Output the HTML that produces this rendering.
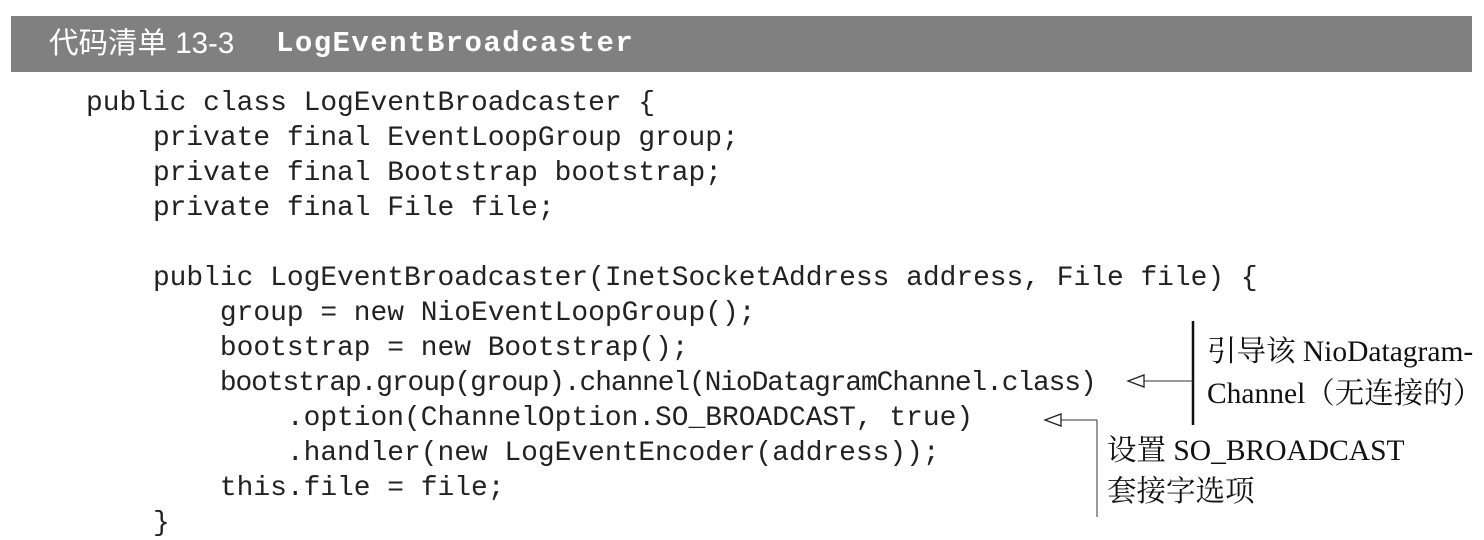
<!DOCTYPE html>
<html><head><meta charset="utf-8"><style>
html,body{margin:0;padding:0;background:#fff;width:1484px;height:540px;overflow:hidden;position:relative}
.bar{position:absolute;left:11px;top:16px;width:1461px;height:56px;background:#808080}
.t1{position:absolute;left:49px;top:26px;font:29.5px "Liberation Sans","Noto Sans CJK SC",sans-serif;color:#fff;line-height:36px;white-space:nowrap}
.t2{position:absolute;left:276px;top:27px;font:bold 29px "Liberation Mono",monospace;letter-spacing:1.45px;color:#fff;line-height:34px;white-space:nowrap}
.code{position:absolute;left:86px;top:86px;font:27.9px "Liberation Mono",monospace;line-height:35px;color:#222;white-space:pre;margin:0}
.n{letter-spacing:-1.1px}
.a{position:absolute;font:29.5px "Liberation Serif","Noto Serif CJK SC",serif;color:#111;white-space:nowrap;line-height:40px}
</style></head><body>
<div class="bar"></div>
<div class="t1">代码清单 13-3</div>
<div class="t2">LogEventBroadcaster</div>
<pre class="code">public class LogEventBroadcaster {
    private final EventLoopGroup group;
    private final Bootstrap bootstrap;
    private final File file;

    public LogEventBroadcaster(InetSocketAddress address, File file) {
        group = new NioEventLoopGroup();
        bootstrap = new Bootstrap();
        <span class="n">bootstrap.group(group).channel(NioDatagramChannel.class)</span>
            .option(ChannelOption.SO_BROADCAST, true)
            .handler(new LogEventEncoder(address));
        this.file = file;
    }</pre>
<svg style="position:absolute;left:0;top:0" width="1484" height="540">
<line x1="1193" y1="321" x2="1193" y2="425" stroke="#111" stroke-width="2.5"/>
<line x1="1144" y1="381" x2="1193" y2="381" stroke="#333" stroke-width="1"/>
<polygon points="1128,381 1144,375 1144,387" fill="#fff" stroke="#222" stroke-width="1.3"/>
<line x1="1097" y1="420" x2="1097" y2="517" stroke="#333" stroke-width="1"/>
<line x1="1061" y1="420" x2="1097" y2="420" stroke="#333" stroke-width="1"/>
<polygon points="1045,420 1061,414 1061,426" fill="#fff" stroke="#222" stroke-width="1.3"/>
</svg>
<div class="a" style="left:1207px;top:332px">引导该 NioDatagram-</div>
<div class="a" style="left:1207px;top:374px">Channel（无连接的）</div>
<div class="a" style="left:1107px;top:431px">设置 SO_BROADCAST</div>
<div class="a" style="left:1107px;top:472px">套接字选项</div>
</body></html>
